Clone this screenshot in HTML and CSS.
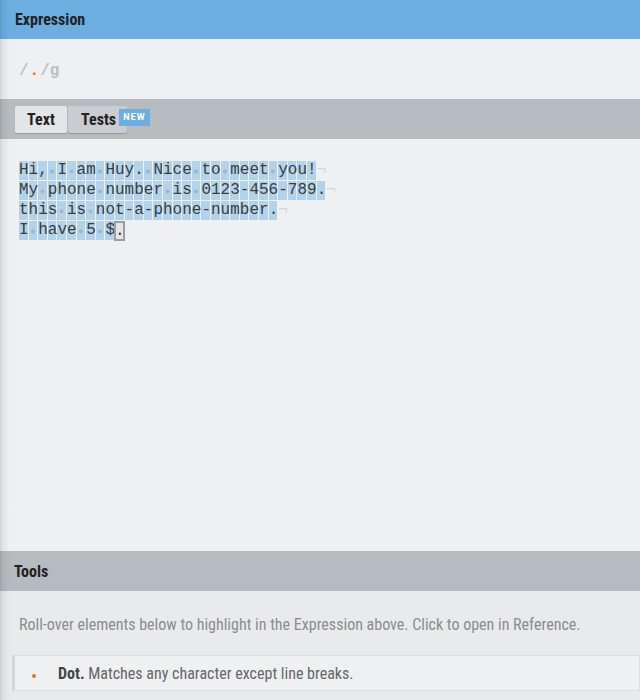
FILE: index.html
```html
<!DOCTYPE html>
<html>
<head>
<meta charset="utf-8">
<link rel="stylesheet" href="styles.css">
</head>
<body>
<div class="app">
  <div class="panel-head head-blue">Expression</div>
  <div class="expr"><span class="delim">/</span><span class="dot">.</span><span class="delim">/g</span></div>
  <div class="tabbar">
    <div class="tab tab-active">Text</div>
    <div class="tab tab-tests">Tests<span class="badge">NEW</span></div>
  </div>
  <div class="editor">
    <div class="line"><span class="hl" style="width:31ch">Hi,<span class="sp"> </span>I<span class="sp"> </span>am<span class="sp"> </span>Huy.<span class="sp"> </span>Nice<span class="sp"> </span>to<span class="sp"> </span>meet<span class="sp"> </span>you!</span><span class="nl">¬</span></div>
    <div class="line"><span class="hl" style="width:32ch">My<span class="sp"> </span>phone<span class="sp"> </span>number<span class="sp"> </span>is<span class="sp"> </span>0123-456-789.</span><span class="nl">¬</span></div>
    <div class="line"><span class="hl" style="width:27ch">this<span class="sp"> </span>is<span class="sp"> </span>not-a-phone-number.</span><span class="nl">¬</span></div>
    <div class="line"><span class="hl" style="width:10ch">I<span class="sp"> </span>have<span class="sp"> </span>5<span class="sp"> </span>$</span><span class="sel">.</span></div>
  </div>
  <div class="panel-head head-grey">Tools</div>
  <div class="tools">
    <p class="hint">Roll-over elements below to highlight in the Expression above. Click to open in Reference.</p>
    <div class="item"><span class="item-dot"></span><span class="item-text"><b>Dot.</b> Matches any character except line breaks.</span></div>
  </div>
</div>
</body>
</html>
```
FILE: styles.css
```css
html, body {
  margin: 0;
  padding: 0;
  background: #eff0f2;
}
body {
  width: 640px;
  height: 700px;
  overflow: hidden;
  font-family: "Roboto Condensed", "Liberation Sans Narrow", "Roboto", sans-serif;
}
.app {
  position: relative;
  display: flex;
  flex-direction: column;
  height: 700px;
}
.app::after {
  content: "";
  position: absolute;
  left: 0;
  top: 0;
  bottom: 0;
  width: 10px;
  background: linear-gradient(to right, rgba(0,0,0,0.12), rgba(0,0,0,0.05) 30%, rgba(0,0,0,0) 100%);
  pointer-events: none;
}
.panel-head {
  height: 39px;
  display: flex;
  align-items: center;
  padding-left: 15px;
  font-weight: bold;
  font-size: 16px;
  color: #222;
  flex: none;
}
.head-blue {
  background: #6caee0;
}
.head-grey {
  background: #b6bbbf;
  height: 40px;
  padding-left: 14px;
}
.expr {
  height: 60px;
  box-sizing: border-box;
  padding: 4px 0 0 19px;
  display: flex;
  align-items: center;
  font-family: "Liberation Mono", monospace;
  font-size: 16px;
  font-weight: bold;
  color: #bdbfc2;
  flex: none;
}
.expr .dot {
  color: #e07a26;
  margin: 0 1px;
}
.tabbar {
  height: 40px;
  background: #b6bbbf;
  display: flex;
  align-items: center;
  padding-left: 15px;
  flex: none;
}
.tab {
  height: 27px;
  display: flex;
  align-items: center;
  justify-content: center;
  font-weight: bold;
  font-size: 16px;
  color: #222;
  box-shadow: 0 1px 1px rgba(0,0,0,0.18);
  border-radius: 2px;
}
.tab-active {
  width: 52px;
  background: #e4e5e7;
}
.tab-tests {
  width: 59px;
  margin-left: 1px;
  background: #c9ccd0;
  position: relative;
  justify-content: flex-start;
  padding-left: 13px;
  box-sizing: border-box;
}
.badge {
  position: absolute;
  left: 51px;
  top: 3px;
  width: 31px;
  height: 17px;
  background: #6caee0;
  color: #fff;
  font-family: "Roboto", sans-serif;
  font-size: 9px;
  font-weight: bold;
  letter-spacing: 1px;
  display: flex;
  align-items: center;
  justify-content: center;
}
.editor {
  flex: 1;
  padding: 22px 0 0 19px;
  font-family: "Liberation Mono", monospace;
  font-size: 16px;
  line-height: 20px;
  color: #3a3d40;
}
.line {
  height: 20px;
  white-space: pre;
  display: flex;
}
.hl {
  display: block;
  height: 19px;
  line-height: 19px;
  background: repeating-linear-gradient(to right, #b3d3ec 0, #b3d3ec calc(1ch - 1px), #eff0f2 calc(1ch - 1px), #eff0f2 1ch);
}
.sp {
  display: inline-block;
  width: 1ch;
  height: 19px;
  vertical-align: top;
  background: radial-gradient(circle at calc(50% - 0.5px) 55%, #9fb7cb 1.7px, rgba(159,183,203,0) 2.3px);
}
.nl {
  color: #d4d6d9;
  line-height: 19px;
}
.sel {
  display: block;
  width: calc(1ch + 1px);
  height: 20px;
  margin-left: -1px;
  box-sizing: border-box;
  border: 2px solid #9a9ea2;
  background: #e3e5e8;
  line-height: 16px;
  text-indent: -1px;
}
.tools {
  height: 109px;
  box-sizing: border-box;
  background: #e9eaec;
  padding: 1px 0 0 12px;
  flex: none;
}
.hint {
  margin: 23px 0 0 7px;
  font-size: 16px;
  color: #8a8d90;
  line-height: 20px;
}
.item {
  margin-top: 20px;
  height: 34px;
  background: #eff0f2;
  border: 1px solid #dcdee0;
  border-left: 3px solid #d4d6d8;
  display: flex;
  align-items: center;
  font-size: 16px;
  color: #666;
}
.item-dot {
  width: 4px;
  height: 4px;
  border-radius: 50%;
  background: #e07a26;
  margin: 6px 22px 0 17px;
}
.item-text b {
  color: #444;
}
```
